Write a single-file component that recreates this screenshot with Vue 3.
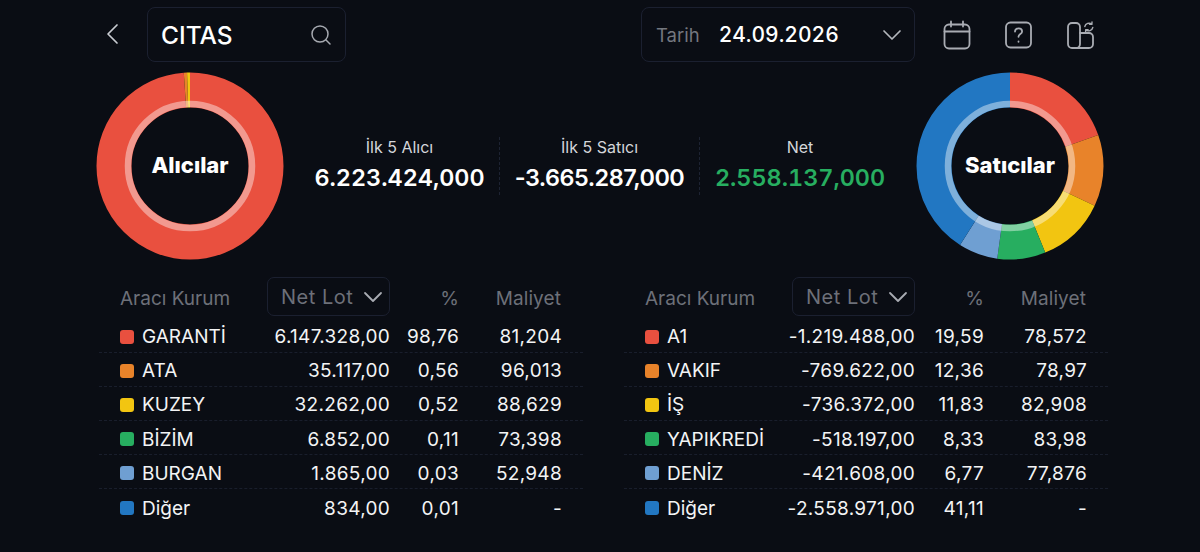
<script setup>
const colors = {
  red: "#e9503f",
  orange: "#e8832a",
  yellow: "#f2c511",
  green: "#27ae60",
  sky: "#6f9fd2",
  blue: "#2277c2",
};

const buyers = [
  { name: "GARANTİ", color: colors.red, lot: "6.147.328,00", pct: "98,76", cost: "81,204", share: 98.76 },
  { name: "ATA", color: colors.orange, lot: "35.117,00", pct: "0,56", cost: "96,013", share: 0.56 },
  { name: "KUZEY", color: colors.yellow, lot: "32.262,00", pct: "0,52", cost: "88,629", share: 0.52 },
  { name: "BİZİM", color: colors.green, lot: "6.852,00", pct: "0,11", cost: "73,398", share: 0.11 },
  { name: "BURGAN", color: colors.sky, lot: "1.865,00", pct: "0,03", cost: "52,948", share: 0.03 },
  { name: "Diğer", color: colors.blue, lot: "834,00", pct: "0,01", cost: "-", share: 0.01 },
];

const sellers = [
  { name: "A1", color: colors.red, lot: "-1.219.488,00", pct: "19,59", cost: "78,572", share: 19.59 },
  { name: "VAKIF", color: colors.orange, lot: "-769.622,00", pct: "12,36", cost: "78,97", share: 12.36 },
  { name: "İŞ", color: colors.yellow, lot: "-736.372,00", pct: "11,83", cost: "82,908", share: 11.83 },
  { name: "YAPIKREDİ", color: colors.green, lot: "-518.197,00", pct: "8,33", cost: "83,98", share: 8.33 },
  { name: "DENİZ", color: colors.sky, lot: "-421.608,00", pct: "6,77", cost: "77,876", share: 6.77 },
  { name: "Diğer", color: colors.blue, lot: "-2.558.971,00", pct: "41,11", cost: "-", share: 41.11 },
];

const stats = [
  { label: "İlk 5 Alıcı", value: "6.223.424,000" },
  { label: "İlk 5 Satıcı", value: "-3.665.287,000", negative: true },
  { label: "Net", value: "2.558.137,000", positive: true },
];

const tables = [buyers, sellers];

const R = 76;
const CIRC = 2 * Math.PI * R;

// donut dilimleri: stroke-dasharray ile
const slices = (rows) => {
  let used = 0;
  return rows.map((row) => {
    const len = (row.share / 100) * CIRC;
    const slice = { color: row.color, dash: `${len} ${CIRC - len}`, offset: -used };
    used += len;
    return slice;
  });
};

const donuts = { left: slices(buyers), right: slices(sellers) };
</script>

<template>
  <div class="page">
    <header class="topbar">
      <button class="back" aria-label="Geri">
        <svg width="14" height="22" viewBox="0 0 14 22" fill="none">
          <path d="M12 2 3 11l9 9" stroke="#c9ccd2" stroke-width="1.7" stroke-linecap="round" stroke-linejoin="round" />
        </svg>
      </button>
      <div class="search">
        <span class="search-text">CITAS</span>
        <svg width="22" height="22" viewBox="0 0 22 22" fill="none">
          <circle cx="10" cy="10" r="8" stroke="#a6a9b0" stroke-width="1.5" />
          <path d="m16 16 4 4" stroke="#a6a9b0" stroke-width="1.5" stroke-linecap="round" />
        </svg>
      </div>
      <div class="date">
        <span class="date-label">Tarih</span>
        <span class="date-value">24.09.2026</span>
        <svg class="date-caret" width="20" height="12" viewBox="0 0 20 12" fill="none">
          <path d="m2 2 8 8 8-8" stroke="#b4b7bd" stroke-width="1.7" stroke-linecap="round" stroke-linejoin="round" />
        </svg>
      </div>
      <div class="tools">
        <svg width="28" height="30" viewBox="0 0 28 30" fill="none" stroke="#a9acb3" stroke-width="1.8" stroke-linecap="round">
          <rect x="1.500" y="4.500" width="25" height="24" rx="4.500" />
          <path d="M1.500 11.500h25M8 1.500v5M20 1.500v5" />
        </svg>
        <svg width="27" height="28" viewBox="0 0 27 28" fill="none" stroke="#a9acb3" stroke-width="1.8" stroke-linecap="round">
          <rect x="1" y="1.500" width="25" height="25" rx="4.500" />
          <path d="M10 10.600c0-2 1.600-3.300 3.600-3.300s3.500 1.300 3.500 3.100c0 2.600-3.600 2.700-3.600 5.400" />
          <path d="M13.500 20.400v.4" />
        </svg>
        <svg width="28" height="28" viewBox="0 0 28 28" fill="none" stroke="#a9acb3" stroke-width="1.8" stroke-linecap="round" stroke-linejoin="round">
          <rect x="2" y="2" width="12" height="25" rx="4" />
          <path d="M14 12h9a4 4 0 0 1 4 4v7a4 4 0 0 1-4 4H7" />
          <path d="M18.800 5.500a4.300 4.300 0 0 1 7-2.300M26 1l-.1 2.400-2.400-.1M26.800 6.500a4.300 4.300 0 0 1-7 2.300M19.600 11l.1-2.400 2.400.1" stroke-width="1.400" />
        </svg>
      </div>
    </header>

    <section class="summary">
      <div class="donut">
        <svg width="188" height="188" viewBox="0 0 188 188">
          <g transform="rotate(-90 94 94)" fill="none">
            <circle
              v-for="(s, i) in donuts.left"
              :key="i"
              cx="94"
              cy="94"
              :r="R"
              stroke-width="35"
              :stroke="s.color"
              :stroke-dasharray="s.dash"
              :stroke-dashoffset="s.offset"
            />
          </g>
          <circle cx="94" cy="94" r="62" fill="none" stroke="#fff" stroke-opacity=".42" stroke-width="6.500" />
        </svg>
        <span class="donut-title">Alıcılar</span>
      </div>

      <div class="stats">
        <div v-for="stat in stats" :key="stat.label" class="stat">
          <div class="stat-label">{{ stat.label }}</div>
          <div class="stat-value" :class="{ positive: stat.positive, negative: stat.negative }">{{ stat.value }}</div>
        </div>
      </div>

      <div class="donut">
        <svg width="188" height="188" viewBox="0 0 188 188">
          <g transform="rotate(-90 94 94)" fill="none">
            <circle
              v-for="(s, i) in donuts.right"
              :key="i"
              cx="94"
              cy="94"
              :r="R"
              stroke-width="35"
              :stroke="s.color"
              :stroke-dasharray="s.dash"
              :stroke-dashoffset="s.offset"
            />
          </g>
          <circle cx="94" cy="94" r="62" fill="none" stroke="#fff" stroke-opacity=".42" stroke-width="6.500" />
        </svg>
        <span class="donut-title">Satıcılar</span>
      </div>
    </section>

    <section class="tables">
      <div v-for="(rows, t) in tables" :key="t" class="table">
        <div class="row head">
          <span class="broker">Aracı Kurum</span>
          <span class="select">
            Net Lot
            <svg width="20" height="12" viewBox="0 0 20 12" fill="none">
              <path d="m2 2 8 8 8-8" stroke="#a9acb3" stroke-width="1.8" stroke-linecap="round" stroke-linejoin="round" />
            </svg>
          </span>
          <span class="num">%</span>
          <span class="num">Maliyet</span>
        </div>
        <div v-for="row in rows" :key="row.name" class="row item">
          <span class="broker">
            <i class="swatch" :style="{ background: row.color }"></i>{{ row.name }}
          </span>
          <span class="num">{{ row.lot }}</span>
          <span class="num">{{ row.pct }}</span>
          <span class="num">{{ row.cost }}</span>
        </div>
      </div>
    </section>
  </div>
</template>

<style>
html,
body {
  background: #0a0d14;
}
</style>

<style scoped>
.page {
  width: 1200px;
  height: 552px;
  box-sizing: border-box;
  padding: 7px 96px 0;
  background: #0a0d14;
  color: #fff;
  font-family: Inter, "Liberation Sans", sans-serif;
  overflow: hidden;
}

.topbar {
  display: flex;
  align-items: center;
  height: 55px;
}

.back {
  width: 51px;
  height: 55px;
  padding: 2px 0 0 9px;
  background: none;
  border: none;
  text-align: left;
}

.search,
.date {
  display: flex;
  align-items: center;
  box-sizing: border-box;
  height: 55px;
  border: 1px solid #1b2030;
  border-radius: 8px;
}

.search {
  width: 199px;
  padding: 0 13px;
  justify-content: space-between;
}

.search-text {
  font-size: 24.500px;
  font-weight: 500;
}

.date {
  width: 274px;
  margin-left: 295px;
  padding: 0 12px 0 14px;
}

.date-label {
  font-size: 18.500px;
  color: #74777f;
}

.date-value {
  margin-left: 19px;
  font-size: 21px;
  font-weight: 500;
  font-variant-numeric: tabular-nums;
}

.date-caret {
  margin-left: auto;
}

.tools {
  display: flex;
  align-items: center;
  gap: 34px;
  margin-left: 28px;
}

.summary {
  display: flex;
  align-items: center;
  justify-content: space-between;
  margin-top: 10px;
}

.donut {
  position: relative;
  width: 188px;
  height: 188px;
}

.donut svg {
  display: block;
}

.donut-title {
  position: absolute;
  inset: 0 0 2px;
  display: flex;
  align-items: center;
  justify-content: center;
  font-size: 22px;
  font-weight: 800;
}

.stats {
  display: grid;
  grid-template-columns: repeat(3, 200px);
}

.stat {
  padding-bottom: 2px;
  text-align: center;
  border-right: 1px dashed #1d2333;
}

.stat:last-child {
  border-right: none;
}

.stat-label {
  font-size: 16px;
  line-height: 20px;
  color: #d4d6da;
}

.stat-value {
  margin-top: 6px;
  font-size: 23.400px;
  line-height: 30px;
  font-weight: 600;
  font-variant-numeric: tabular-nums;
}

.negative {
  font-variant-numeric: normal;
  letter-spacing: -0.5px;
}

.positive {
  color: #27ae60;
}

.tables {
  display: grid;
  grid-template-columns: 484px 484px;
  justify-content: space-between;
  margin: 17px 0 0 3px;
  width: 1009px;
}

.row {
  display: grid;
  grid-template-columns: 147px 123px 69px 103px;
  align-items: center;
  padding-left: 21px;
  box-sizing: border-box;
}

.head {
  height: 41.500px;
  align-items: start;
  font-size: 19px;
  color: #6d7079;
}

.head .broker,
.head .num {
  padding-top: 10px;
}

.head .num:last-child {
  padding-right: 1px;
  letter-spacing: 0.1px;
}

.select {
  display: flex;
  align-items: center;
  justify-content: space-between;
  box-sizing: border-box;
  height: 39px;
  padding: 0 6px 0 13px;
  border: 1px solid #1b2030;
  border-radius: 7px;
  font-size: 20px;
  letter-spacing: 0.5px;
}

.item {
  height: 34.200px;
  padding-top: 3px;
  font-size: 19px;
  color: #f3f4f5;
  border-bottom: 1px dashed #191e2c;
}

.item:last-child {
  border-bottom: none;
}

.item .num {
  letter-spacing: 0.3px;
}

.broker {
  display: flex;
  align-items: center;
}

.swatch {
  width: 14px;
  height: 14px;
  margin-right: 8px;
  border-radius: 3px;
}

.num {
  display: flex;
  justify-content: flex-end;
  white-space: nowrap;
}
</style>
